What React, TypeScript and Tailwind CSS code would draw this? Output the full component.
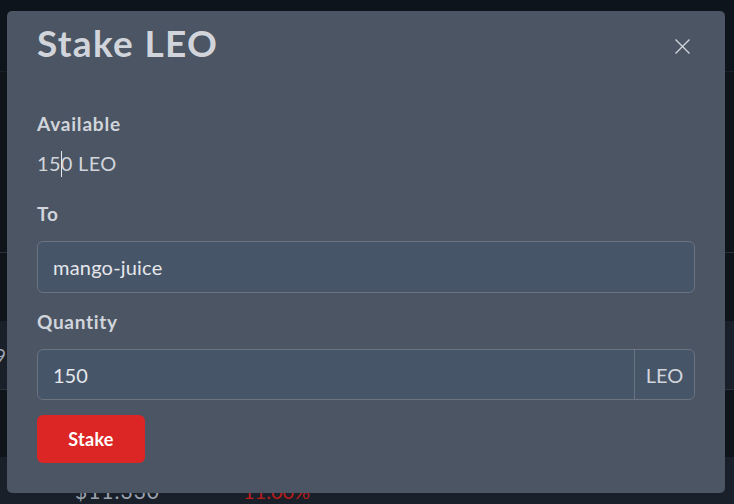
export default function App() {
  return (
    <div className="relative w-[734px] h-[504px] overflow-hidden bg-[#10161e] font-['Lato',sans-serif]">
      {/* underlying page */}
      <div className="h-[72px] bg-[#0d141c] border-b border-[#18202a]" />
      <div className="h-[181px] bg-[#0f141b] border-b border-[#2a313b]" />
      <div className="h-[68px] bg-[#0f141b]" />
      <div className="h-[69px] bg-[#1a202a] border-b border-[#2a313b] flex items-center">
        <div className="w-[6px] flex justify-end">
          <span className="whitespace-nowrap text-[20px] text-[#9ca3af]">0.19</span>
        </div>
      </div>
      <div className="h-[67px] bg-[#0f141b]" />
      <div className="h-[68px] bg-[#1a202a] flex items-center">
        <span className="ml-[75px] w-[168px] text-[21px] tracking-[1px] text-[#9ca3af]">$11.330</span>
        <span className="text-[20px] text-[#b91c1c]">11.00%</span>
      </div>

      {/* modal */}
      <div className="absolute left-[7px] top-[11px] w-[718px] rounded-[5px] bg-[#4b5563] px-[30px] pt-[10px] pb-[30px] text-[#d1d5db]">
        <div className="flex items-start justify-between">
          <h2 className="text-[37px] leading-[44px] font-bold tracking-[1.3px] text-[#d1d5db]">Stake LEO</h2>
          <button className="mt-[18px] mr-[5px] w-[15px] h-[15px] text-[#d1d5db]">
            <svg viewBox="0 0 15 15" width="15" height="15" fill="none" stroke="currentColor" strokeWidth="1.4">
              <path d="M0.5 0.5 L14.5 14.5 M14.5 0.5 L0.5 14.5" />
            </svg>
          </button>
        </div>

        <div className="mt-[47px] text-[19px] leading-[24px] font-bold tracking-[0.8px]">Available</div>
        <div className="relative mt-[15px] text-[20px] leading-[24px] tracking-[0.3px]">
          150 LEO
          <span className="absolute left-[24px] top-[0px] h-[26px] w-[1px] bg-[#e5e7eb]" />
        </div>

        <div className="mt-[27px] text-[19px] leading-[24px] font-bold tracking-[0.8px]">To</div>
        <div className="mt-[15px] h-[52px] rounded-[6px] border border-[#6b7280] bg-[#475569] px-[15px] flex items-center text-[20px] leading-[24px] tracking-[0.2px] text-[#e5e7eb]">
          mango-juice
        </div>

        <div className="mt-[17px] text-[19px] leading-[24px] font-bold tracking-[0.7px]">Quantity</div>
        <div className="mt-[15px] h-[51px] flex rounded-[6px] border border-[#6b7280] bg-[#475569] text-[20px] leading-[24px] text-[#e5e7eb]">
          <div className="flex-1 px-[15px] flex items-center">150</div>
          <div className="w-[60px] border-l border-[#6b7280] flex items-center justify-center text-[#d1d5db]">LEO</div>
        </div>

        <button className="mt-[15px] w-[108px] h-[48px] rounded-[6px] bg-[#dc2626] text-white text-[18px] font-bold tracking-[0.3px] flex items-center justify-center">
          Stake
        </button>
      </div>
    </div>
  );
}
